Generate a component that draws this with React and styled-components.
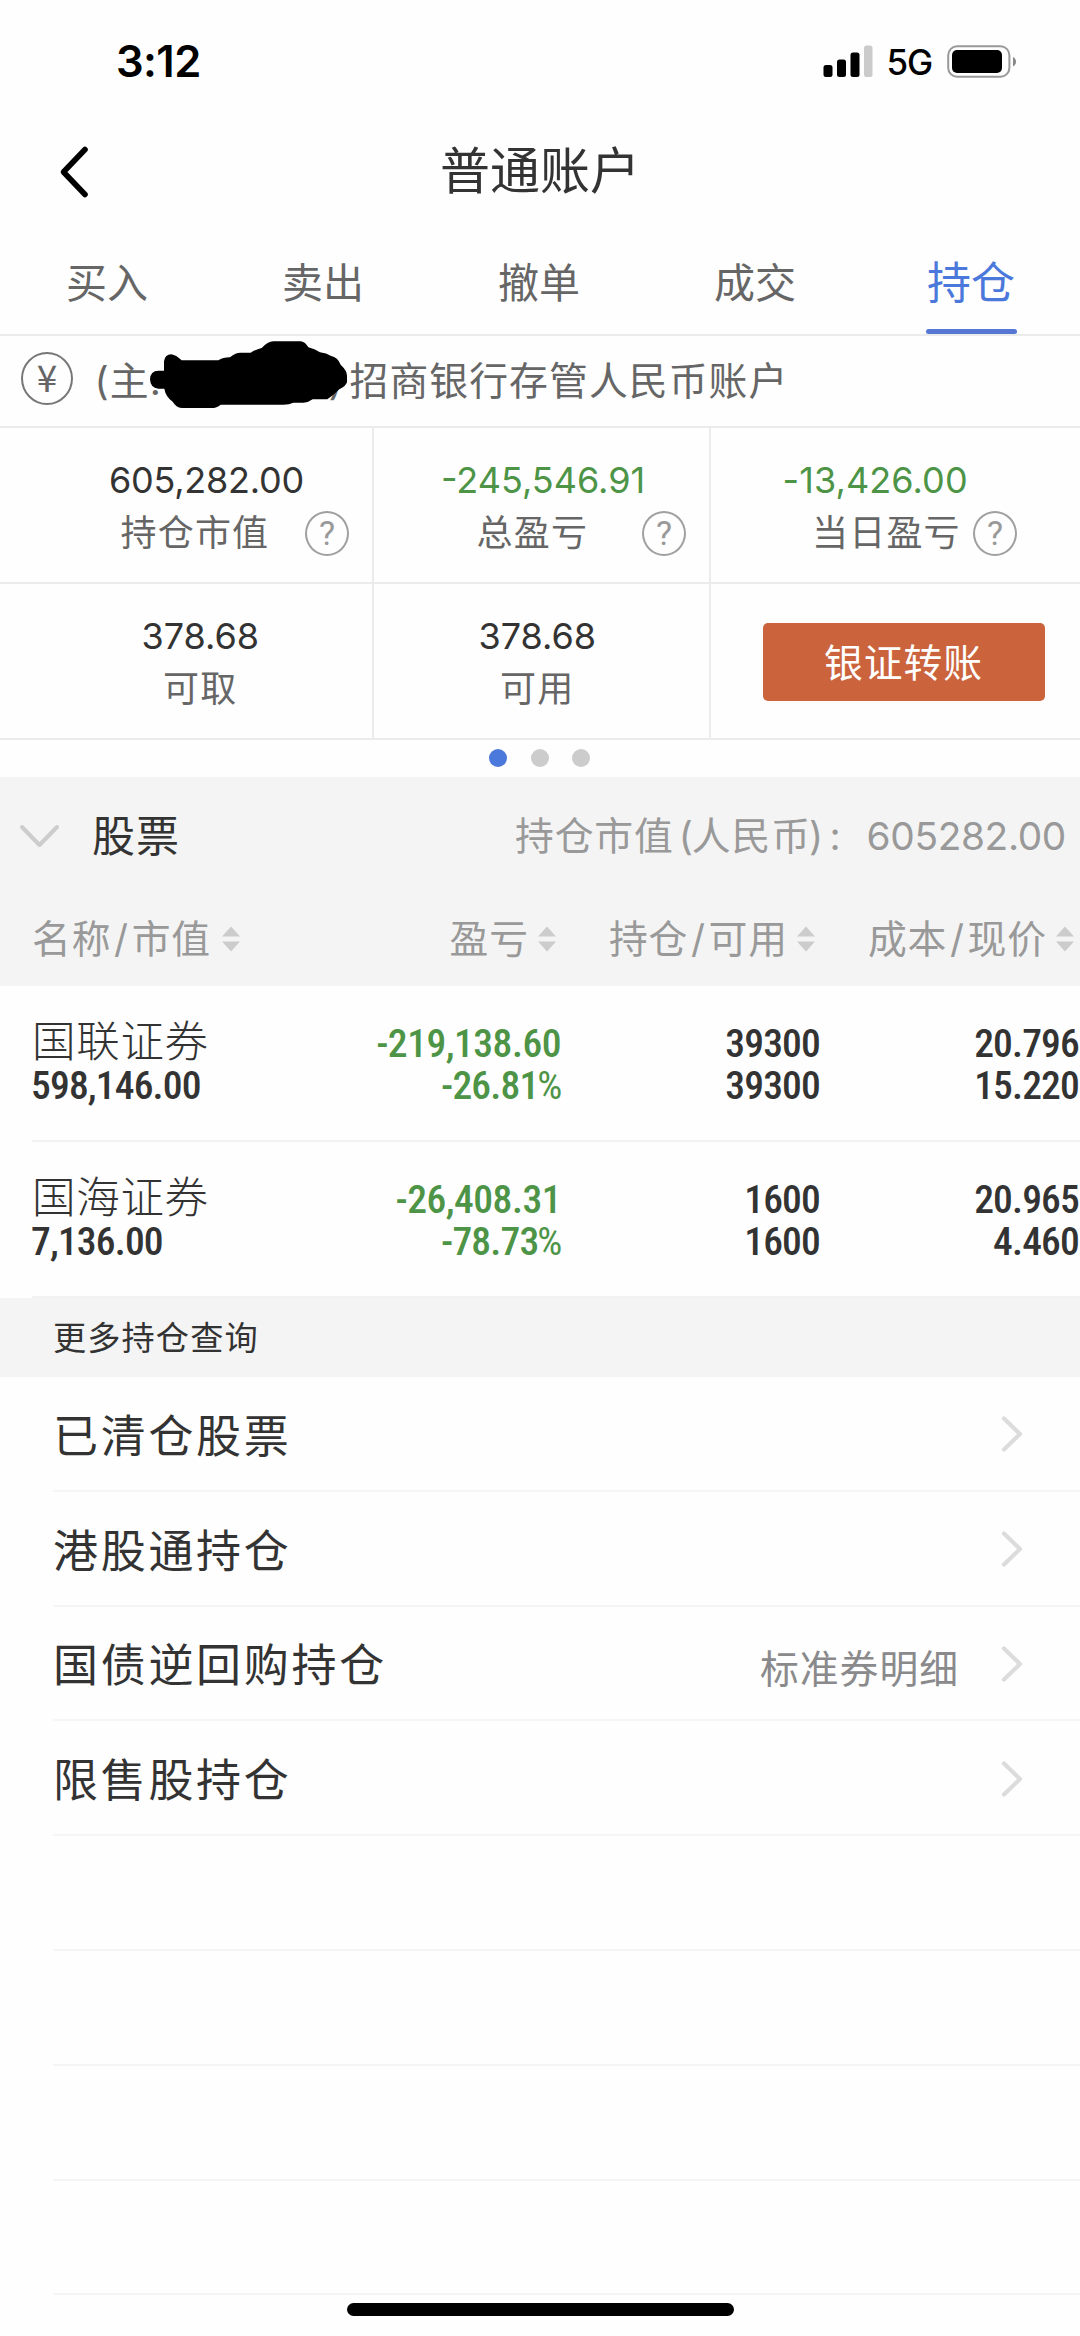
import React from "react";
import styled, { createGlobalStyle } from "styled-components";

const GlobalStyle = createGlobalStyle`
  * { box-sizing: border-box; }
  html, body { margin: 0; padding: 0; background: #fefefe; }
  body {
    width: 1080px;
    font-family: Inter, "Noto Sans CJK SC", sans-serif;
    color: #333;
    -webkit-font-smoothing: antialiased;
  }
`;

const Screen = styled.main`
  width: 1080px;
  height: 2336px;
  overflow: hidden;
  position: relative;
  display: flex;
  flex-direction: column;
  background: #fefefe;
  white-space: nowrap;
`;

/* status bar */
const StatusBar = styled.header`
  height: 123px;
  flex: none;
  display: flex;
  align-items: center;
  justify-content: space-between;
  padding: 0 62px 0 116px;
  color: #000;
`;
const Clock = styled.span`
  font-size: 43.5px;
  font-weight: 600;
  line-height: 50px;
  letter-spacing: -0.6px;
  padding-bottom: 2px;
`;
const StatusIcons = styled.div`
  display: flex;
  align-items: center;
`;
const Network = styled.span`
  font-size: 35px;
  font-weight: 500;
  line-height: 44px;
  letter-spacing: -1.2px;
  padding-top: 1px;
  margin: 0 15px 0 14px;
`;

/* navigation */
const NavBar = styled.nav`
  height: 94px;
  flex: none;
  display: grid;
  grid-template-columns: 200px 1fr 200px;
  align-items: center;
`;
const BackButton = styled.button`
  border: 0;
  background: none;
  padding: 4px 0 0 58px;
  display: flex;
`;
const Title = styled.h1`
  margin: 2px 0 0;
  font-size: 50px;
  font-weight: 400;
  line-height: 60px;
  text-align: center;
`;

const Tabs = styled.div`
  height: 119px;
  flex: none;
  display: grid;
  grid-template-columns: repeat(5, 1fr);
  border-bottom: 2px solid #ebebeb;
`;
const Tab = styled.div`
  display: flex;
  flex-direction: column;
  align-items: center;
  padding: 41px 2px 0 0;
  font-size: ${(p) => (p.$active ? 44 : 41)}px;
  line-height: 50px;
  color: ${(p) => (p.$active ? "#4a78db" : "#666")};
`;
const TabUnderline = styled.i`
  width: 91px;
  height: 5px;
  margin-top: 21px;
  border-radius: 3px;
  background: #5678d4;
`;

/* account line */
const Account = styled.div`
  height: 92px;
  flex: none;
  display: flex;
  align-items: center;
  padding: 0 0 0 21px;
  border-bottom: 2px solid #ebebeb;
  font-size: 38.8px;
  line-height: 50px;
  letter-spacing: 1.1px;
  color: #666;
`;
const CurrencyBadge = styled.span`
  width: 52px;
  height: 53px;
  border: 2px solid #777;
  border-radius: 50%;
  display: flex;
  align-items: center;
  justify-content: center;
  font-family: "Noto Sans CJK SC", sans-serif;
  font-size: 37px;
  line-height: 40px;
  padding-bottom: 5px;
  letter-spacing: 0;
  margin: 0 21.5px 5px 0;
`;
const AccountPrefix = styled.span`
  width: 77px;
`;
const AccountMask = styled.svg`
  margin: 0 -1px 13px -22px;
  position: relative;
  z-index: 1;
`;
const AccountClose = styled.span`
  margin-left: -18px;
  width: 21px;
`;

/* summary */
const Summary = styled.section`
  flex: none;
  display: grid;
  grid-template-columns: 374px 337px 1fr;
  grid-template-rows: 156px 156px;
`;
const SummaryCell = styled.div`
  border-bottom: 2px solid #ebebeb;
  border-right: ${(p) => (p.$last ? "0" : "2px solid #ebebeb")};
  padding-top: 27px;
  display: flex;
  flex-direction: column;
`;
const SummaryValue = styled.div`
  padding-left: ${(p) => p.$inset}px;
  font-size: 36px;
  line-height: 50px;
  letter-spacing: ${(p) => p.$tracking || 0}px;
  color: ${(p) => (p.$down ? "#4d9447" : "#333")};
`;
const SummaryLabel = styled.div`
  display: flex;
  align-items: center;
  margin-top: 2px;
  height: 52px;
  padding: 0 ${(p) => p.$end || 0}px 0 ${(p) => p.$inset}px;
  font-size: 36px;
  line-height: 50px;
  letter-spacing: 1.2px;
  color: #666;
`;
const HelpIcon = styled.span`
  width: 44px;
  height: 45px;
  margin-left: auto;
  border: 2.4px solid #a0a0a0;
  border-radius: 50%;
  display: flex;
  align-items: center;
  justify-content: center;
  font-size: 34px;
  font-family: Roboto, sans-serif;
  line-height: 40px;
  letter-spacing: 0;
  color: #999;
`;
const TransferCell = styled(SummaryCell)`
  padding: 39px 0 0 52px;
`;
const TransferButton = styled.button`
  width: 282px;
  height: 78px;
  border: 0;
  border-radius: 5px;
  padding: 2px 1px 0 0;
  background: #cb643d;
  color: #fff;
  font-family: inherit;
  font-size: 38.8px;
  line-height: 50px;
  letter-spacing: 1px;
`;

const Pager = styled.div`
  height: 37px;
  flex: none;
  display: flex;
  justify-content: center;
  align-items: center;
  gap: 23.5px;
  padding: 0 1px 2px 0;
`;
const PagerDot = styled.i`
  width: 18px;
  height: 18px;
  border-radius: 50%;
  background: ${(p) => (p.$active ? "#4a78db" : "#ccc")};
`;

/* holdings */
const SectionHead = styled.div`
  height: 115px;
  flex: none;
  display: flex;
  align-items: center;
  background: #f4f4f4;
  padding: 2px 14px 0 19px;
`;
const SectionName = styled.h2`
  margin: 0 auto 0 32px;
  font-size: 43px;
  font-weight: 400;
  line-height: 56px;
  letter-spacing: 1px;
`;
const SectionNote = styled.span`
  display: flex;
  font-size: 38.8px;
  line-height: 50px;
  letter-spacing: 0.9px;
  color: #999;
`;
const SectionPart = styled.span`
  margin-left: ${(p) => p.$gap || 0}px;
`;
const SectionTotal = styled.span`
  margin-left: 25px;
  letter-spacing: -0.35px;
`;
const Paren = styled.span`
  margin: 0 -2px;
`;
const holdingColumns = `
  display: grid;
  grid-template-columns: 238px 290px 259px 259px;
`;
const ColumnHeads = styled.div`
  ${holdingColumns}
  height: 94px;
  flex: none;
  align-items: center;
  background: #f4f4f4;
  padding-left: 32px;
`;
const ColumnHead = styled.div`
  display: flex;
  align-items: center;
  justify-content: ${(p) => (p.$start ? "flex-start" : "flex-end")};
  padding-right: 4px;
  gap: ${(p) => (p.$start ? 11 : 9)}px;
  font-size: 38.8px;
  line-height: 50px;
  letter-spacing: 0.9px;
  color: #999;
`;
const Slash = styled.span`
  padding: 0 2.7px;
`;
const Holding = styled.div`
  ${holdingColumns}
  height: 156px;
  flex: none;
  margin-left: 32px;
  padding-top: 37px;
  border-bottom: 2px solid #f2f2f2;
`;
const HoldingCell = styled.div`
  display: flex;
  flex-direction: column;
  align-items: ${(p) => (p.$start ? "flex-start" : "flex-end")};
  margin: ${(p) => (p.$start ? "0 0 0 -1px" : "0 -1px 0 0")};
  font-family: "Roboto Condensed", Roboto, sans-serif;
  font-size: 39.6px;
  font-weight: 500;
  line-height: 42px;
  letter-spacing: -0.85px;
  color: ${(p) => (p.$down ? "#4d9447" : "#333")};
`;
const HoldingName = styled.span`
  font-family: Inter, "Noto Sans CJK SC", sans-serif;
  font-size: 43.5px;
  font-weight: 300;
  letter-spacing: 0.7px;
  margin: -3px 0 3px 1px;
`;
const Profit = styled.span`
  letter-spacing: -0.5px;
`;
const Percent = styled.span`
  font-weight: 400;
  letter-spacing: -1.4px;
  margin-left: -1px;
`;

/* more */
const MoreHead = styled.div`
  height: 79px;
  flex: none;
  background: #f4f4f4;
  padding: 15px 0 0 53px;
  font-size: 33.2px;
  line-height: 50px;
  letter-spacing: 1.1px;
`;
const MoreRow = styled.div`
  height: 114.8px;
  flex: none;
  margin-left: 53px;
  padding: 7px 57px 0 0;
  border-bottom: 2px solid #f5f5f5;
  display: flex;
  align-items: center;
  font-size: 45px;
  line-height: 56px;
  letter-spacing: 2.7px;
`;
const MoreDetail = styled.span`
  margin-left: auto;
  padding-top: 5px;
  font-size: 38.8px;
  letter-spacing: 1px;
  color: #8a8a8c;
`;
const MoreArrow = styled.svg`
  margin: 0 0 5px ${(p) => (p.$tight ? "42px" : "auto")};
`;
const HomeIndicator = styled.div`
  position: absolute;
  left: 347px;
  bottom: 20px;
  width: 387px;
  height: 13px;
  border-radius: 7px;
  background: #000;
`;

const SortIcon = () => (
  <svg width="18" height="26" viewBox="0 0 18 26">
    <path d="M9 0.5L18 10.5H0zM9 25.5L18 15.5H0z" fill="#ccc" />
  </svg>
);

const summary = [
  { value: "605,282.00", label: "持仓市值", vx: 109, lx: 120.5, end: 23, tracking: -0.25 },
  { value: "-245,546.91", label: "总盈亏", down: true, vx: 67, lx: 102.5, end: 23 },
  { value: "-13,426.00", label: "当日盈亏", down: true, vx: 71.5, lx: 101, end: 63, last: true, tracking: 0.1 },
  { value: "378.68", label: "可取", vx: 141.5, lx: 163 },
  { value: "378.68", label: "可用", vx: 104.5, lx: 126 },
];

const holdings = [
  { name: "国联证券", value: "598,146.00", profit: "-219,138.60", rate: "-26.81", held: "39300", free: "39300", cost: "20.796", price: "15.220" },
  { name: "国海证券", value: "7,136.00", profit: "-26,408.31", rate: "-78.73", held: "1600", free: "1600", cost: "20.965", price: "4.460" },
];

const more = [
  { name: "已清仓股票" },
  { name: "港股通持仓" },
  { name: "国债逆回购持仓", detail: "标准券明细" },
  { name: "限售股持仓" },
];

const tabs = ["买入", "卖出", "撤单", "成交", "持仓"];

export default function App() {
  return (
    <Screen>
      <GlobalStyle />
      <StatusBar>
        <Clock>3:12</Clock>
        <StatusIcons>
          <svg width="50" height="34" viewBox="0 0 50 34">
            <rect x="0.5" y="20" width="9" height="12" rx="2.5" />
            <rect x="14" y="14.5" width="9" height="17.5" rx="2.5" />
            <rect x="27.5" y="7.5" width="9" height="24.5" rx="2.5" />
            <rect x="41" y="0.5" width="8.5" height="31.5" rx="2.5" fill="#cbcbcb" />
          </svg>
          <Network>5G</Network>
          <svg width="71" height="34" viewBox="0 0 71 34">
            <rect x="1.2" y="1.2" width="61.2" height="30.6" rx="9" fill="none" stroke="#999" strokeWidth="2" />
            <rect x="5" y="5" width="50" height="23" rx="5" />
            <path d="M66 12q3 1.5 3 4.7t-3 4.7z" fill="#888" />
          </svg>
        </StatusIcons>
      </StatusBar>

      <NavBar>
        <BackButton>
          <svg width="32" height="54" viewBox="0 0 32 54" fill="none" stroke="#000" strokeWidth="5.6" strokeLinecap="round" strokeLinejoin="round">
            <path d="M27 4.5L5.5 27L27 49.5" />
          </svg>
        </BackButton>
        <Title>普通账户</Title>
      </NavBar>

      <Tabs>
        {tabs.map((name, i) => (
          <Tab key={name} $active={i === 4}>
            {name}
            {i === 4 && <TabUnderline />}
          </Tab>
        ))}
      </Tabs>

      <Account>
        <CurrencyBadge>¥</CurrencyBadge>
        <AccountPrefix>(主:</AccountPrefix>
        <AccountMask width="198" height="68" viewBox="450 61 594 204">
          <path d="M450 176Q451 150 475 150H492V122Q495 101 514 101Q528 103 545 119H655Q668 110 690 110Q704 96 722 96H752Q768 86 785 82Q803 63 820 62H903Q916 64 925 80Q944 84 960 95Q980 98 992 105Q1014 110 1022 132Q1041 150 1041 165V185Q1036 198 1018 206Q1000 224 982 236H938Q925 246 910 246H880Q868 252 850 252H662Q650 262 635 262H545Q528 260 518 243Q497 228 493 204H475Q451 202 450 176Z" />
        </AccountMask>
        <AccountClose>)</AccountClose>
        <span>招商银行存管人民币账户</span>
      </Account>

      <Summary>
        {summary.map((s) => (
          <SummaryCell key={s.label} $last={s.last}>
            <SummaryValue $inset={s.vx} $down={s.down} $tracking={s.tracking}>{s.value}</SummaryValue>
            <SummaryLabel $inset={s.lx} $end={s.end}>
              {s.label}
              {s.end && <HelpIcon>?</HelpIcon>}
            </SummaryLabel>
          </SummaryCell>
        ))}
        <TransferCell $last>
          <TransferButton>银证转账</TransferButton>
        </TransferCell>
      </Summary>

      <Pager>
        <PagerDot $active />
        <PagerDot />
        <PagerDot />
      </Pager>

      <SectionHead>
        <svg width="41" height="26" viewBox="0 0 41 26" fill="none" stroke="#ccc" strokeWidth="4" strokeLinecap="round" strokeLinejoin="round">
          <path d="M3 4L20.5 22L38 4" />
        </svg>
        <SectionName>股票</SectionName>
        <SectionNote>
          <span>持仓市值</span>
          <SectionPart $gap={7}><Paren>(</Paren>人民币<Paren>)</Paren></SectionPart>
          <SectionPart $gap={7.5}>:</SectionPart>
          <SectionTotal>605282.00</SectionTotal>
        </SectionNote>
      </SectionHead>

      <ColumnHeads>
        <ColumnHead $start><span>名称<Slash>/</Slash>市值</span><SortIcon /></ColumnHead>
        <ColumnHead><span>盈亏</span><SortIcon /></ColumnHead>
        <ColumnHead><span>持仓<Slash>/</Slash>可用</span><SortIcon /></ColumnHead>
        <ColumnHead><span>成本<Slash>/</Slash>现价</span><SortIcon /></ColumnHead>
      </ColumnHeads>

      {holdings.map((h) => (
        <Holding key={h.name}>
          <HoldingCell $start>
            <HoldingName>{h.name}</HoldingName>
            <span>{h.value}</span>
          </HoldingCell>
          <HoldingCell $down>
            <Profit>{h.profit}</Profit>
            <span>{h.rate}<Percent>%</Percent></span>
          </HoldingCell>
          <HoldingCell>
            <span>{h.held}</span>
            <span>{h.free}</span>
          </HoldingCell>
          <HoldingCell>
            <span>{h.cost}</span>
            <span>{h.price}</span>
          </HoldingCell>
        </Holding>
      ))}

      <MoreHead>更多持仓查询</MoreHead>
      {more.map((m) => (
        <MoreRow key={m.name}>
          {m.name}
          {m.detail && <MoreDetail>{m.detail}</MoreDetail>}
          <MoreArrow $tight={m.detail} width="22" height="38" viewBox="0 0 22 38" fill="none" stroke="#dcdcdc" strokeWidth="4.2" strokeLinecap="round" strokeLinejoin="round">
            <path d="M3 3.5L19 19L3 34.5" />
          </MoreArrow>
        </MoreRow>
      ))}
      <MoreRow />
      <MoreRow />
      <MoreRow />
      <MoreRow />
      <HomeIndicator />
    </Screen>
  );
}
